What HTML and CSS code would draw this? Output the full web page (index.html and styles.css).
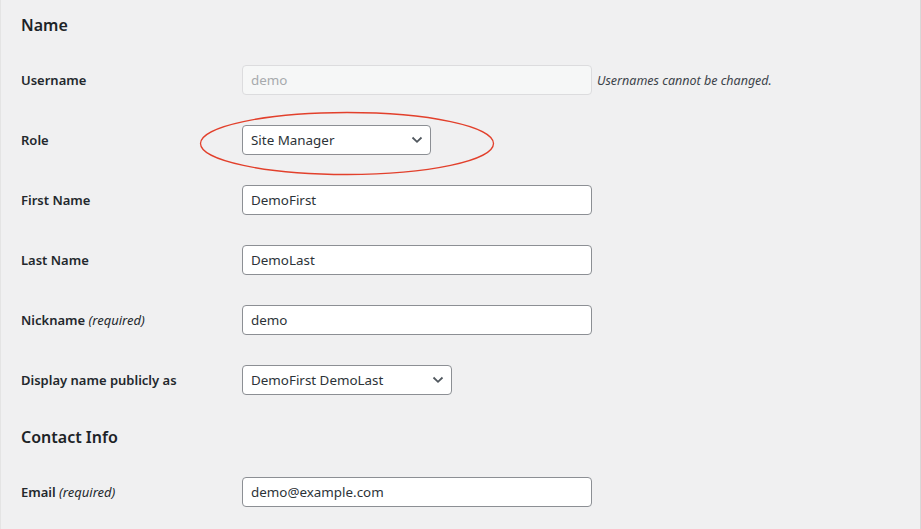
FILE: index.html
```html
<!DOCTYPE html>
<html lang="en">
<head>
<meta charset="utf-8">
<title>Profile</title>
<link rel="stylesheet" href="styles.css">
</head>
<body>
<div class="page">
  <h2 class="section-title">Name</h2>
  <div class="form-table">
    <div class="row">
      <div class="label">Username</div>
      <div class="field">
        <div class="input disabled">demo</div>
        <span class="desc">Usernames cannot be changed.</span>
      </div>
    </div>
    <div class="row">
      <div class="label">Role</div>
      <div class="field">
        <div class="select role">
          <span>Site Manager</span>
          <svg class="chev" width="12" height="8" viewBox="0 0 12 8"><path d="M1.5 1.5 L6 5.8 L10.5 1.5" fill="none" stroke="#50575e" stroke-width="1.8"/></svg>
        </div>
      </div>
    </div>
    <div class="row">
      <div class="label">First Name</div>
      <div class="field"><div class="input">DemoFirst</div></div>
    </div>
    <div class="row">
      <div class="label">Last Name</div>
      <div class="field"><div class="input">DemoLast</div></div>
    </div>
    <div class="row">
      <div class="label">Nickname <span class="req">(required)</span></div>
      <div class="field"><div class="input">demo</div></div>
    </div>
    <div class="row">
      <div class="label">Display name publicly as</div>
      <div class="field">
        <div class="select display">
          <span>DemoFirst DemoLast</span>
          <svg class="chev" width="12" height="8" viewBox="0 0 12 8"><path d="M1.5 1.5 L6 5.8 L10.5 1.5" fill="none" stroke="#50575e" stroke-width="1.8"/></svg>
        </div>
      </div>
    </div>
  </div>
  <h2 class="section-title contact">Contact Info</h2>
  <div class="form-table">
    <div class="row">
      <div class="label">Email <span class="req">(required)</span></div>
      <div class="field"><div class="input">demo@example.com</div></div>
    </div>
  </div>
  <svg class="annotation" width="296" height="65" viewBox="0 0 296 65"><ellipse cx="148" cy="32.5" rx="146.5" ry="31" fill="none" stroke="#e2402c" stroke-width="1.3"/></svg>
</div>
</body>
</html>
```

FILE: styles.css
```css
html, body {
  margin: 0;
  padding: 0;
}
body {
  background: #f0f0f1;
  font-family: "Noto Sans", "Open Sans", sans-serif;
  color: #1d2327;
  width: 921px;
  height: 529px;
  overflow: hidden;
}
.page {
  position: relative;
  box-sizing: border-box;
  height: 529px;
  padding-left: 20px;
  border-left: 1px solid #e4e4e4;
  border-right: 1px solid #d8d8d8;
}
.section-title {
  margin: 0;
  height: 50px;
  line-height: 51px;
  font-size: 16px;
  font-weight: 600;
}
.section-title.contact {
  height: 52px;
  line-height: 54px;
}
.row {
  display: grid;
  grid-template-columns: 221px 1fr;
  height: 60px;
  align-items: center;
}
.label {
  font-size: 13px;
  font-weight: 600;
  color: #23282d;
}
.req {
  font-style: italic;
  font-weight: 400;
}
.field {
  display: flex;
  align-items: center;
  gap: 5px;
}
.input, .select {
  box-sizing: border-box;
  height: 30px;
  border: 1px solid #8c8f94;
  border-radius: 4px;
  background: #fff;
  padding: 0 8px;
  font-size: 13.4px;
  color: #2c3338;
  display: flex;
  align-items: center;
}
.input {
  width: 350px;
}
.input.disabled {
  background: #f6f7f7;
  border-color: #dcdcde;
  color: #a7aaad;
}
.desc {
  font-size: 12.5px;
  font-style: italic;
  color: #3c434a;
}
.select {
  justify-content: space-between;
  padding-right: 7px;
}
.select.role {
  width: 189px;
}
.select.display {
  width: 210px;
}
.chev {
  display: block;
}
.annotation {
  position: absolute;
  left: 198px;
  top: 111px;
}
```
